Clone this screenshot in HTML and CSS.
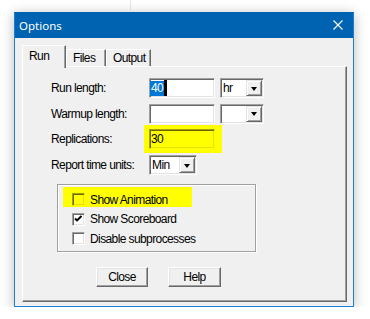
FILE: index.html
```html
<!DOCTYPE html>
<html lang="en">
<head>
    <meta charset="UTF-8">
    <title>Options</title>
    <link rel="stylesheet" href="styles.css">
</head>
<body>
    <div class="bg-line"></div>

    <div class="dialog">
        <div class="titlebar">
            <span class="title">Options</span>
            <svg class="close-x" width="10" height="10" viewBox="0 0 10 10">
                <path d="M0.5 0.5 L9.5 9.5 M9.5 0.5 L0.5 9.5" stroke="#fff" stroke-width="1.1" fill="none"/>
            </svg>
        </div>

        <div class="client">
            <div class="tabs">
                <div class="tab tab-run active">Run</div>
                <div class="tab tab-files">Files</div>
                <div class="tab tab-output">Output</div>
            </div>

            <div class="panel">
                <div class="form">
                    <span class="label">Run length:</span>
                    <div class="field">
                        <div class="edit"><span class="sel">40</span><span class="caret"></span></div>
                        <div class="combo combo-unit"><span class="combo-text">hr</span><span class="drop"><span class="arrow"></span></span></div>
                    </div>

                    <span class="label">Warmup length:</span>
                    <div class="field">
                        <div class="edit"></div>
                        <div class="combo combo-unit"><span class="combo-text"></span><span class="drop"><span class="arrow"></span></span></div>
                    </div>

                    <span class="label">Replications:</span>
                    <div class="field">
                        <div class="hl">
                            <div class="edit"><span class="edit-text">30</span></div>
                        </div>
                    </div>

                    <span class="label">Report time units:</span>
                    <div class="field">
                        <div class="combo combo-min"><span class="combo-text">Min</span><span class="drop"><span class="arrow"></span></span></div>
                    </div>
                </div>

                <div class="group">
                    <div class="check hl-row">
                        <span class="box"></span>
                        <span>Show Animation</span>
                    </div>
                    <div class="check">
                        <span class="box">
                            <svg width="11" height="11" viewBox="0 0 11 11">
                                <polyline points="2,4.5 4,6.5 8.5,2" stroke="#000" stroke-width="1.9" fill="none"/>
                            </svg>
                        </span>
                        <span>Show Scoreboard</span>
                    </div>
                    <div class="check">
                        <span class="box"></span>
                        <span>Disable subprocesses</span>
                    </div>
                </div>

                <div class="buttons">
                    <button class="btn">Close</button>
                    <button class="btn btn-help">Help</button>
                </div>
            </div>
        </div>
    </div>
</body>
</html>
```

FILE: styles.css
```css
body {
    margin: 0;
    background: #fff;
    font-family: "Liberation Sans", Arial, sans-serif;
    font-size: 12px;
    letter-spacing: -0.6px;
    color: #000;
}

.bg-line {
    width: 1px;
    height: 10px;
    margin-left: 130px;
    background: #e6e6e6;
}

.dialog {
    margin: 2px 0 0 14px;
    width: 340px;
    height: 295px;
    box-sizing: border-box;
    border: 1px solid #1a80d6;
    border-top-color: #0063b1;
    background: #f0f0f0;
    box-shadow: 0 2px 12px rgba(0, 0, 0, 0.28);
    display: flex;
    flex-direction: column;
}

.titlebar {
    height: 25px;
    background: #0063b1;
    color: #fff;
    display: flex;
    align-items: center;
    justify-content: space-between;
    padding: 0 10px 0 4px;
    font-family: "Noto Sans", "Liberation Sans", sans-serif;
    font-size: 11.5px;
    letter-spacing: 0;
}

.close-x {
    margin-top: -1px;
}

.client {
    flex: 1;
    padding: 7px 6px 4px 7px;
    display: flex;
    flex-direction: column;
}

/* tab strip */
.tabs {
    display: flex;
    align-items: flex-end;
    height: 21px;
}

.tab {
    height: 17px;
    box-sizing: border-box;
    padding: 1px 0 0 6px;
    line-height: 14px;
    border: 1px solid;
    border-color: #fff #696969 transparent #fff;
    border-bottom: none;
    box-shadow: inset -1px 0 0 #a0a0a0;
    background: #f0f0f0;
}

.tab-run { width: 44px; }
.tab-files { width: 40px; }
.tab-output { width: 45px; }

.tab.active {
    height: 23px;
    margin-bottom: -2px;
    padding-top: 3px;
    position: relative;
    z-index: 1;
}

.panel {
    flex: 1;
    border: 1px solid;
    border-color: #fff #696969 #696969 #fff;
    box-shadow: inset -1px -1px 0 #a0a0a0;
    padding: 11px 0 0 28px;
}

/* form rows */
.form {
    display: grid;
    grid-template-columns: 98px auto;
    grid-auto-rows: 20px;
    row-gap: 5.7px;
    align-items: center;
    justify-items: start;
}

.field {
    display: flex;
    align-items: center;
}

.edit {
    width: 66px;
    height: 20px;
    box-sizing: border-box;
    border: 1px solid;
    border-color: #a0a0a0 #fff #fff #a0a0a0;
    box-shadow: inset 1px 1px 0 #696969, inset -1px -1px 0 #e3e3e3;
    background: #fff;
    display: flex;
    align-items: center;
}

.edit-text {
    padding-left: 1px;
}

.sel {
    background: #0078d7;
    color: #fff;
    height: 15px;
    line-height: 15px;
    padding: 0 1px;
}

.caret {
    width: 3px;
    height: 16px;
    background: #000;
}

.combo {
    height: 20px;
    box-sizing: border-box;
    margin-left: 5px;
    padding: 1px;
    border: 1px solid;
    border-color: #a0a0a0 #fff #fff #a0a0a0;
    box-shadow: inset 1px 1px 0 #696969, inset -1px -1px 0 #e3e3e3;
    background: #fff;
    display: flex;
    justify-content: space-between;
}

.combo-unit { width: 44px; }
.combo-min { width: 48px; margin-left: 0; }

.combo-text {
    padding-left: 1px;
    line-height: 16px;
}

.drop {
    width: 16px;
    box-sizing: border-box;
    background: #f0f0f0;
    border: 1px solid;
    border-color: #e3e3e3 #696969 #696969 #e3e3e3;
    box-shadow: inset 1px 1px 0 #fff, inset -1px -1px 0 #a0a0a0;
    display: flex;
    align-items: center;
    justify-content: center;
}

.arrow {
    width: 0;
    height: 0;
    border-left: 3.5px solid transparent;
    border-right: 3.5px solid transparent;
    border-top: 4px solid #000;
    margin-top: 1px;
}

/* yellow marker */
.hl {
    background: #ffff00;
    padding: 4px 7px 4px 5px;
    margin: -4px -7px -4px -5px;
}

.hl .edit {
    background: #ffff00;
    border-color: #a0a000 #ffff00 #ffff00 #a0a000;
    box-shadow: inset 1px 1px 0 #696900, inset -1px -1px 0 #e3e300;
}

/* group box */
.group {
    margin: 9px 0 0 6px;
    width: 199px;
    height: 68px;
    box-sizing: border-box;
    border: 1px solid #a0a0a0;
    box-shadow: inset 1px 1px 0 #fff, 1px 1px 0 #fff;
    padding: 8px 0 0 14px;
    display: flex;
    flex-direction: column;
    gap: 6.5px;
}

.check {
    display: flex;
    align-items: center;
    gap: 5px;
    height: 13px;
}

.check.hl-row {
    background: #ffff00;
    margin: -6px 0 -1px -9px;
    padding: 6px 0 1px 9px;
    width: 120px;
}

.box {
    width: 13px;
    height: 13px;
    box-sizing: border-box;
    flex: none;
    border: 1px solid;
    border-color: #a0a0a0 #fff #fff #a0a0a0;
    box-shadow: inset 1px 1px 0 #696969, inset -1px -1px 0 #e3e3e3;
    background: #fff;
}

.box svg {
    display: block;
}

.hl-row .box {
    background: #ffff00;
    border-color: #a0a000 #ffff00 #ffff00 #a0a000;
    box-shadow: inset 1px 1px 0 #696900, inset -1px -1px 0 #e3e300;
}

/* buttons */
.buttons {
    display: flex;
    gap: 20px;
    margin: 15px 0 0 45px;
}

.btn {
    width: 52px;
    height: 20px;
    padding: 0;
    font: inherit;
    letter-spacing: inherit;
    color: #000;
    background: #f0f0f0;
    border: 1px solid;
    border-color: #fff #696969 #696969 #fff;
    box-shadow: inset -1px -1px 0 #a0a0a0, inset 1px 1px 0 #e3e3e3;
}

.btn-help {
    width: 53px;
}
```
